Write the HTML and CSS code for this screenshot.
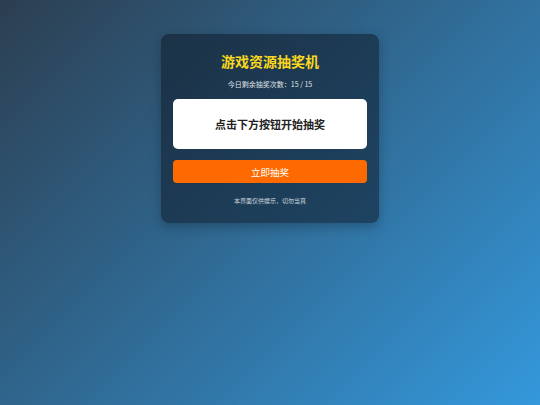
FILE: index.html
```html
<!DOCTYPE html>
<html lang="zh-CN">
<head>
  <meta charset="UTF-8">
  <meta name="viewport" content="width=device-width, initial-scale=1.0">
  <title>游戏资源抽奖机</title>
  <link rel="stylesheet" href="styles.css">
</head>
<body>

<div class="lottery">
  <h1 class="title">游戏资源抽奖机</h1>
  <p class="count">今日剩余抽奖次数：<span id="left">15</span> / 15</p>

  <div class="result" id="result">点击下方按钮开始抽奖</div>

  <button class="draw" onclick="draw()">立即抽奖</button>

  <p class="note">本界面仅供娱乐，切勿当真</p>
</div>

<script>
  let left = 15;
  const prizes = ['金币 x100', '钻石 x10', '经验卡', '谢谢参与', '稀有皮肤', '体力 x50'];

  function draw() {
    if (left <= 0) {
      document.getElementById('result').textContent = '今日次数已用完';
      return;
    }
    left--;
    document.getElementById('left').textContent = left;
    const prize = prizes[Math.floor(Math.random() * prizes.length)];
    document.getElementById('result').textContent = prize;
  }
</script>

</body>
</html>
```

FILE: styles.css
```css
body {
  font-family: "Noto Sans CJK SC", "Noto Sans", sans-serif;
  margin: 0;
  height: 100vh;
  background: linear-gradient(135deg, #2c3e50, #3498db);
  display: flex;
  justify-content: center;
  align-items: flex-start;
}
.lottery {
  width: 194px;
  margin-top: 34px;
  padding: 16px 12px 17px;
  background-color: rgba(15, 25, 40, 0.55);
  border-radius: 8px;
  box-shadow: 0 4px 12px rgba(0, 0, 0, 0.25);
  text-align: center;
  color: #fff;
}
.title {
  margin: 0;
  font-size: 14px;
  line-height: 22px;
  color: #f9d71c;
}
.count {
  margin: 6px 0 0;
  font-size: 7px;
  line-height: 12px;
  color: #e0e6ec;
}
.result {
  margin-top: 9px;
  height: 50px;
  display: flex;
  justify-content: center;
  align-items: center;
  background-color: #fff;
  border-radius: 5px;
  font-size: 11px;
  font-weight: bold;
  color: #222;
}
.draw {
  display: block;
  width: 100%;
  height: 23px;
  margin-top: 11px;
  border: none;
  border-radius: 4px;
  background-color: #ff6a00;
  color: #fff;
  font-family: inherit;
  font-size: 9.5px;
  cursor: pointer;
}
.note {
  margin: 13px 0 0;
  font-size: 6px;
  line-height: 10px;
  color: #ccd5de;
}
```
